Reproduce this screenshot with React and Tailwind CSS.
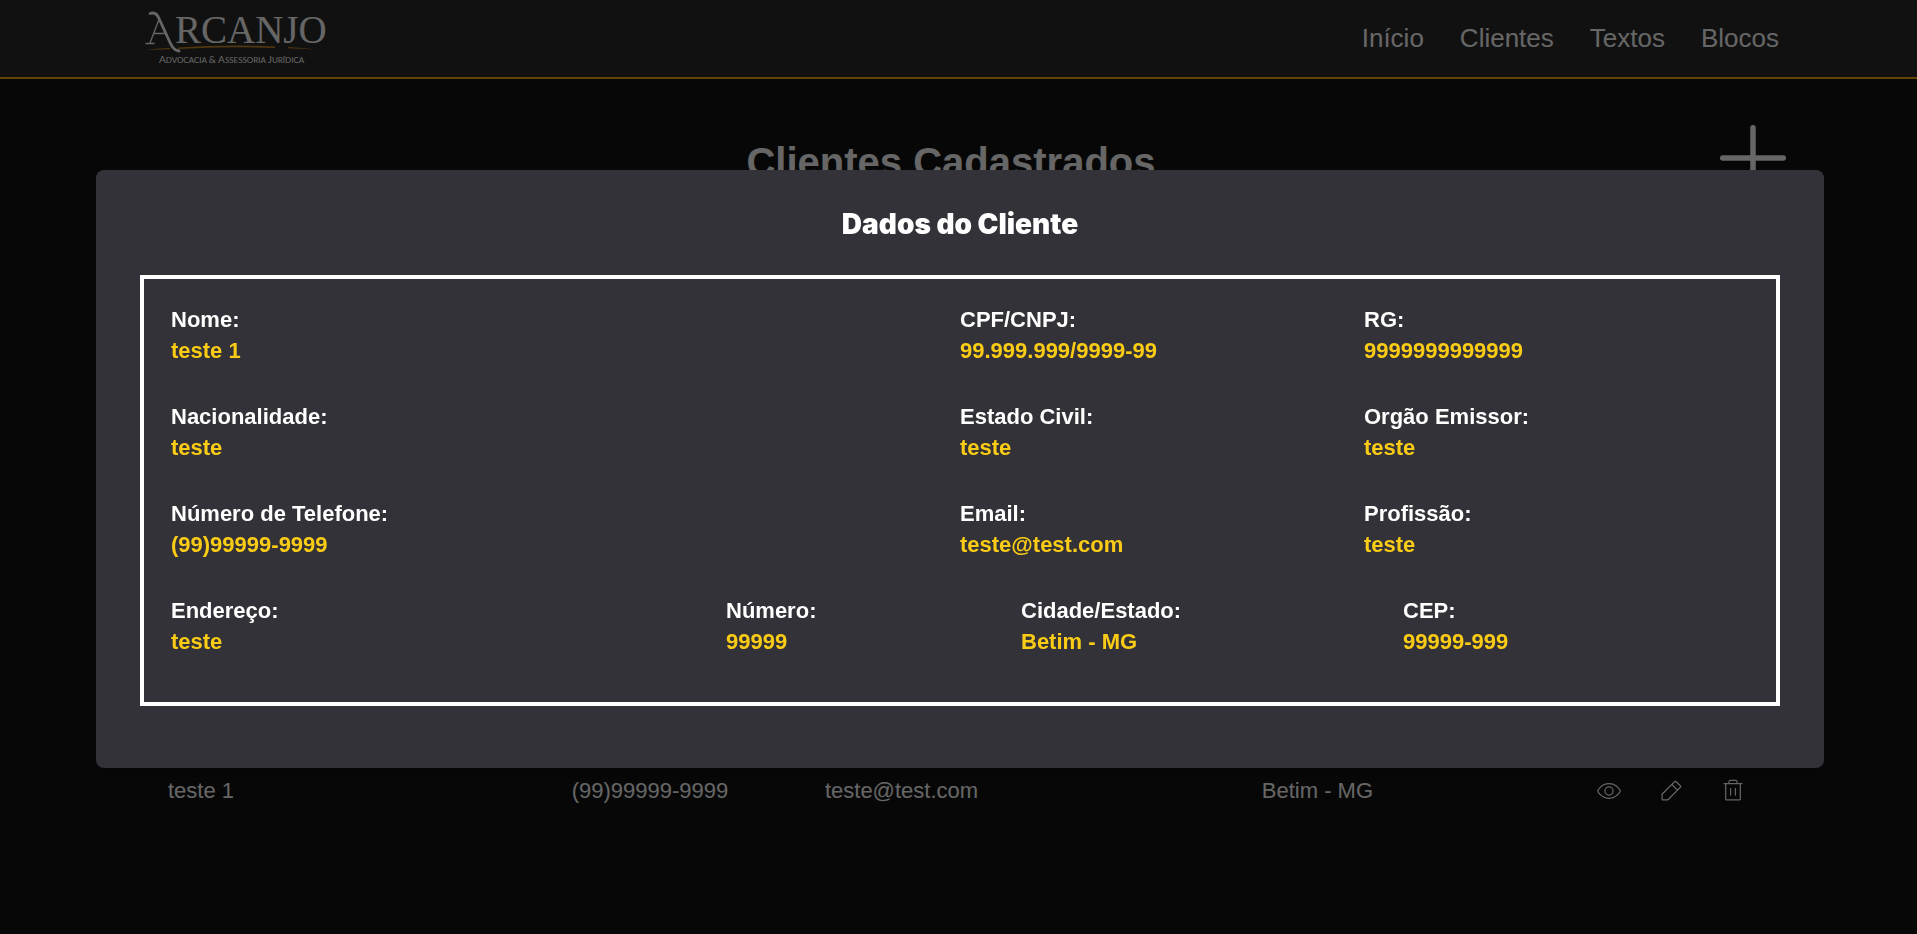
import { PiEyeLight, PiPencilSimpleLight, PiPlus, PiTrashLight } from "react-icons/pi";

const NAV = ["Início", "Clientes", "Textos", "Blocos"];

const CLIENTS = [
  { name: "teste 1", phone: "(99)99999-9999", email: "teste@test.com", city: "Betim - MG" },
];

const THREE_COLUMNS = "grid-cols-[789fr_404fr_385fr]";
const FOUR_COLUMNS = "grid-cols-[555fr_295fr_382fr_346fr]";

const ROWS = [
  {
    columns: THREE_COLUMNS,
    fields: [
      ["Nome", "teste 1"],
      ["CPF/CNPJ", "99.999.999/9999-99"],
      ["RG", "9999999999999"],
    ],
  },
  {
    columns: THREE_COLUMNS,
    fields: [
      ["Nacionalidade", "teste"],
      ["Estado Civil", "teste"],
      ["Orgão Emissor", "teste"],
    ],
  },
  {
    columns: THREE_COLUMNS,
    fields: [
      ["Número de Telefone", "(99)99999-9999"],
      ["Email", "teste@test.com"],
      ["Profissão", "teste"],
    ],
  },
  {
    columns: FOUR_COLUMNS,
    fields: [
      ["Endereço", "teste"],
      ["Número", "99999"],
      ["Cidade/Estado", "Betim - MG"],
      ["CEP", "99999-999"],
    ],
  },
];

function Logo() {
  return (
    <svg viewBox="0 0 184 60" className="h-[60px] w-[184px]" role="img" aria-label="Arcanjo Advocacia e Assessoria Jurídica">
      <g fill="#fff">
        <text x="31" y="34" fontSize="39" fontFamily="'Liberation Serif', serif">RCANJO</text>
        <text x="15" y="54" fontSize="10" fontFamily="Lato, sans-serif">
          A<tspan fontSize="8">DVOCACIA </tspan>
          &amp; A<tspan fontSize="8">SSESSORIA </tspan>
          J<tspan fontSize="8">URÍDICA</tspan>
        </text>
      </g>
      <g fill="none" stroke="#fff" strokeLinecap="round">
        <path d="M6 4.500c4-1.500 7 0 9 5l11 24c2.500 6 5 8 9 8.500" strokeWidth="2.800" />
        <path d="M15.500 9L6 34M2 34.500h8M9.500 24.500h13" strokeWidth="1.300" />
      </g>
      <path d="M34 38.500Q85 35 131 37.500v1.600Q85 37 34 40z" fill="#c8892a" />
      <path d="M4 40.500q12-1.500 22-1.500v1.200q-10 0-22 .500zM144 38q14 .500 28 2.500q-14-1-28-1.300z" fill="#c8892a" />
    </svg>
  );
}

function Field({ label, value }) {
  return (
    <div>
      <dt className="text-white">{label}:</dt>
      <dd className="text-[#facc15]">{value}</dd>
    </div>
  );
}

function ClientDialog() {
  return (
    <div className="fixed inset-0 -right-[3px] flex items-center justify-center bg-black/60 pt-1">
      <section
        role="dialog"
        aria-modal="true"
        aria-labelledby="dialog-title"
        className="w-[90%] rounded-lg bg-[#333238] px-11 pt-9 pb-[62px] shadow-lg"
      >
        <h2 id="dialog-title" className="mb-[33px] text-center font-['Inter',sans-serif] text-[28px] leading-9 font-black text-white">
          Dados do Cliente
        </h2>
        <dl className="flex flex-col gap-[35px] border-4 border-white px-[27px] pt-[25px] pb-[45px] text-[22px] leading-[31px] font-bold">
          {ROWS.map((row) => (
            <div key={row.fields[0][0]} className={`grid ${row.columns}`}>
              {row.fields.map(([label, value]) => (
                <Field key={label} label={label} value={value} />
              ))}
            </div>
          ))}
        </dl>
      </section>
    </div>
  );
}

export default function App() {
  return (
    <div className="min-h-screen overflow-hidden bg-[#121212] font-['Liberation_Sans',Arial,sans-serif] text-white">
      <div className="-mr-[3px]">
        <header className="flex h-[79px] items-center justify-between border-b-2 border-[#f5aa00] bg-[#2b2b2b] pr-[141px] pl-36">
          <a href="#inicio">
            <Logo />
          </a>
          <nav className="flex gap-9 pb-0.5 text-[26px] leading-8">
            {NAV.map((item) => (
              <a key={item} href={`#${item.toLowerCase()}`}>
                {item}
              </a>
            ))}
          </nav>
        </header>

        <main className="pt-[35px]">
          <div className="grid grid-cols-[1fr_auto_1fr] items-center pr-[123px] pl-[105px]">
            <h1 className="col-start-2 pt-2 text-[40px] leading-12 font-bold">Clientes Cadastrados</h1>
            <button type="button" aria-label="Adicionar cliente" className="justify-self-end text-[88px]">
              <PiPlus />
            </button>
          </div>

          <div className="mt-[557px] pr-[169px] pl-[168px]">
            <table className="w-full table-fixed text-left text-[22px] leading-8">
              <colgroup>
                <col className="w-[25.5%]" />
                <col className="w-[16%]" />
                <col className="w-[27.6%]" />
                <col className="w-[21.1%]" />
                <col />
              </colgroup>
              <tbody>
                {CLIENTS.map((client) => (
                  <tr key={client.name} className="h-16">
                    <td>{client.name}</td>
                    <td>{client.phone}</td>
                    <td>{client.email}</td>
                    <td>{client.city}</td>
                    <td>
                      <div className="flex gap-9 text-[26px]">
                        <button type="button" aria-label="Ver cliente">
                          <PiEyeLight />
                        </button>
                        <button type="button" aria-label="Editar cliente">
                          <PiPencilSimpleLight />
                        </button>
                        <button type="button" aria-label="Excluir cliente">
                          <PiTrashLight />
                        </button>
                      </div>
                    </td>
                  </tr>
                ))}
              </tbody>
            </table>
          </div>
        </main>
      </div>
      <ClientDialog />
    </div>
  );
}
